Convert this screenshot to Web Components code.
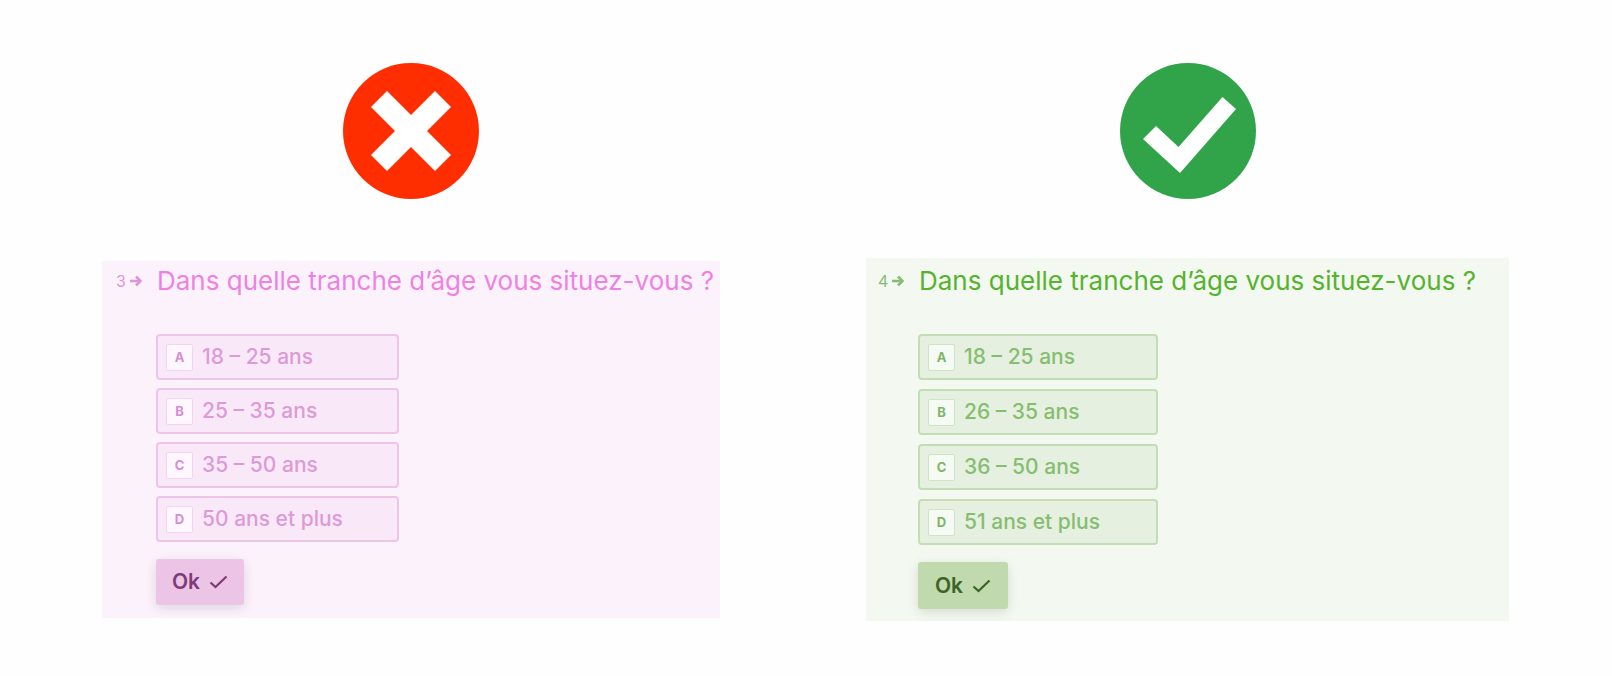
<!DOCTYPE html>
<html lang="fr">
<head>
<meta charset="utf-8">
<title>Tranches d’âge</title>
<style>
  body { margin: 0; background: #fefefe; font-family: Inter, sans-serif; }
</style>
</head>
<body>
<comparison-board>
  <example-column>
    <verdict-icon kind="wrong"></verdict-icon>
    <question-card theme="pink" number="3" question="Dans quelle tranche d’âge vous situez-vous ?">
      <answer-option key="A" group="q3">18 – 25 ans</answer-option>
      <answer-option key="B" group="q3">25 – 35 ans</answer-option>
      <answer-option key="C" group="q3">35 – 50 ans</answer-option>
      <answer-option key="D" group="q3">50 ans et plus</answer-option>
    </question-card>
  </example-column>
  <example-column>
    <verdict-icon kind="right"></verdict-icon>
    <question-card theme="green" number="4" question="Dans quelle tranche d’âge vous situez-vous ?">
      <answer-option key="A" group="q4">18 – 25 ans</answer-option>
      <answer-option key="B" group="q4">26 – 35 ans</answer-option>
      <answer-option key="C" group="q4">36 – 50 ans</answer-option>
      <answer-option key="D" group="q4">51 ans et plus</answer-option>
    </question-card>
  </example-column>
</comparison-board>

<script>
  class ComparisonBoard extends HTMLElement {
    constructor() {
      super();
      this.attachShadow({ mode: "open" }).innerHTML = `
        <style>
          :host { display: block; }
          main {
            display: grid;
            grid-template-columns: 618fr 643fr;
            column-gap: 146px;
            padding: 63px 103px 55px 102px;
          }
        </style>
        <main><slot></slot></main>`;
    }
  }

  class ExampleColumn extends HTMLElement {
    constructor() {
      super();
      this.attachShadow({ mode: "open" }).innerHTML = `
        <style>
          :host { display: block; min-width: 0; }
          section { display: flex; flex-direction: column; }
        </style>
        <section><slot></slot></section>`;
    }
  }

  class VerdictIcon extends HTMLElement {
    connectedCallback() {
      const wrong = this.getAttribute("kind") === "wrong";
      const shape = wrong
        ? '<circle cx="68" cy="68" r="68" fill="#ff2e00"/><path fill="#fff" d="M44 28 68 52 92 28 108 44 84 68 108 92 92 108 68 84 44 108 28 92 52 68 28 44Z"/>'
        : '<circle cx="68" cy="68" r="68" fill="#31a44a"/><path fill="#fff" d="M36 63 58.500 84 102.500 34 116 46 60 110 23 76Z"/>';
      this.attachShadow({ mode: "open" }).innerHTML = `
        <style>
          :host { display: flex; justify-content: center; }
          svg { display: block; width: 136px; height: 136px; }
        </style>
        <svg viewBox="0 0 136 136" role="img" aria-label="${wrong ? "Incorrect" : "Correct"}">${shape}</svg>`;
    }
  }

  class QuestionCard extends HTMLElement {
    connectedCallback() {
      this.attachShadow({ mode: "open" }).innerHTML = `
        <style>
          :host {
            display: block;
            box-sizing: border-box;
            background: var(--card);
          }
          :host([theme="pink"]) {
            --card: #fcf2fc; --title: #ee82e2; --number: #dc96d6;
            --option: #f9e8f7; --line: #efc4e9; --answer: #dc9bd6;
            --badge: #fef8fe; --badge-line: #f3d5f0; --key: #d78dd0;
            --button: #ecc4e6; --button-text: #7d3c78;
            --option-gap: 8px; --option-width: 243px;
            --button-width: 88px; --button-height: 46px;
            margin-top: 62px; padding: 2px 12px 13px 14px;
          }
          :host([theme="green"]) {
            --card: #f3f8f1; --title: #55b32d; --number: #86bd75;
            --option: #e5f0e0; --line: #c3deb4; --answer: #87bd70;
            --badge: #f6faf4; --badge-line: #cfe4c4; --key: #7db568;
            --button: #c0daad; --button-text: #3c6428;
            --option-gap: 9px; --option-width: 240px;
            --button-width: 90px; --button-height: 47px;
            margin-top: 59px; padding: 5px 12px 12px 12px;
          }
          header { display: flex; align-items: center; height: 36px; }
          .number {
            display: flex; align-items: center; gap: 4px;
            width: 41px; flex: none;
            font-size: 16px; color: var(--number);
          }
          .number svg { display: block; width: 13px; height: 12px; }
          h2 {
            margin: 0; white-space: nowrap;
            font-size: 26px; line-height: 36px; font-weight: 400; color: var(--title);
          }
          form { padding: 35px 0 0 40px; }
          .answers { display: grid; row-gap: var(--option-gap); width: var(--option-width); }
          button {
            display: flex; align-items: center; justify-content: center; gap: 9px;
            box-sizing: border-box; width: var(--button-width); height: var(--button-height);
            margin: 17px 0 0; padding: 0; border: 0; border-radius: 3px;
            background: var(--button); color: var(--button-text);
            font: 600 21px/28px Inter, sans-serif;
            box-shadow: 0 3px 12px rgb(0 0 0 / 12%);
          }
          button svg { display: block; width: 19px; height: 14px; }
        </style>
        <header>
          <span class="number"><span>${this.getAttribute("number")}</span>
            <svg viewBox="0 0 13 12" aria-hidden="true" fill="none" stroke="currentColor" stroke-width="2.500"><path d="M0 6H10M6 1.500 10.500 6 6 10.500"/></svg>
          </span>
          <h2 id="title">${this.getAttribute("question")}</h2>
        </header>
        <form>
          <div class="answers" role="radiogroup" aria-labelledby="title"><slot></slot></div>
          <button type="button">Ok<svg viewBox="0 0 19 14" aria-hidden="true" fill="none" stroke="currentColor" stroke-width="2.200"><path d="M1.500 7.500 6.500 12 17.500 1.500"/></svg></button>
        </form>`;
    }
  }

  class AnswerOption extends HTMLElement {
    connectedCallback() {
      this.attachShadow({ mode: "open" }).innerHTML = `
        <style>
          :host { display: block; }
          label {
            position: relative;
            display: flex; align-items: center; gap: 9px;
            box-sizing: border-box; height: 46px;
            padding: 0 8px; border: 2px solid var(--line); border-radius: 4px;
            background: var(--option); color: var(--answer);
            font-size: 21px; line-height: 28px; font-weight: 500; white-space: nowrap;
          }
          input { position: absolute; inset: 0; width: 100%; height: 100%; margin: 0; opacity: 0; }
          .key {
            display: grid; place-items: center;
            box-sizing: border-box; width: 27px; height: 27px;
            border: 1px solid var(--badge-line); border-radius: 2px;
            background: var(--badge); color: var(--key);
            font-size: 13px; line-height: 18px; font-weight: 700;
          }
        </style>
        <label>
          <input type="radio" name="${this.getAttribute("group")}">
          <span class="key">${this.getAttribute("key")}</span>
          <span><slot></slot></span>
        </label>`;
    }
  }

  customElements.define("comparison-board", ComparisonBoard);
  customElements.define("example-column", ExampleColumn);
  customElements.define("verdict-icon", VerdictIcon);
  customElements.define("question-card", QuestionCard);
  customElements.define("answer-option", AnswerOption);
</script>
</body>
</html>
